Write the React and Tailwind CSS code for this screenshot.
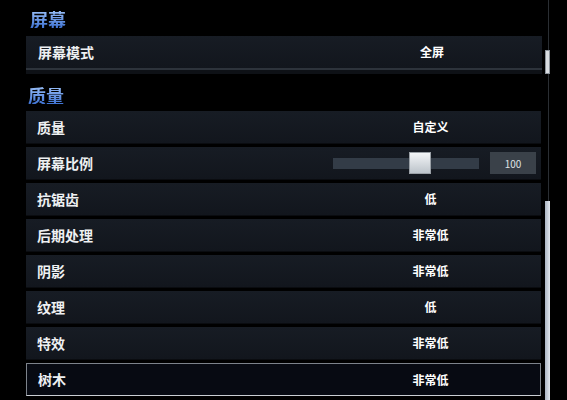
import React from "react";

const FONT = { fontFamily: '"Noto Sans CJK SC", "Noto Sans", sans-serif' };

const rows = [
  { label: "质量", value: "自定义" },
  { label: "屏幕比例", slider: 100 },
  { label: "抗锯齿", value: "低" },
  { label: "后期处理", value: "非常低" },
  { label: "阴影", value: "非常低" },
  { label: "纹理", value: "低" },
  { label: "特效", value: "非常低" },
  { label: "树木", value: "非常低", selected: true },
];

function SectionTitle({ children, className }) {
  return (
    <div className={className}>
      <span className="bg-gradient-to-b from-[#9cc0f7] to-[#3f73d4] bg-clip-text text-[18px] font-bold leading-none text-transparent">
        {children}
      </span>
    </div>
  );
}

function SettingRow({ row }) {
  const base = row.selected
    ? "border border-[#7d838b] border-b-[#c9cdd2] bg-[#070a12]"
    : "border-b border-b-[#0a0c10] bg-gradient-to-b from-[#171c24] to-[#12161d]";

  return (
    <div className={`flex h-[33px] items-center ${base}`}>
      <div className="w-[294px] pl-[11px] text-[14px] font-bold text-[#eef0f2]">{row.label}</div>
      {row.slider ? (
        <div className="flex flex-1 items-center pl-[13px]">
          <div className="relative h-[11px] w-[146px] bg-[#333c47]">
            <div className="absolute left-[76px] top-[-6px] h-[22px] w-[22px] border border-[#9aa0a6] bg-gradient-to-b from-[#f4f6f8] to-[#bcc3ca]" />
          </div>
          <div className="ml-[11px] flex h-[22px] w-[46px] items-center justify-center bg-[#3a4149] text-[10px] text-[#dfe2e5]">
            {row.slider}
          </div>
        </div>
      ) : (
        <div className="flex-1 text-center text-[12px] font-bold text-white">{row.value}</div>
      )}
    </div>
  );
}

export default function App() {
  return (
    <div className="flex h-[400px] w-[567px] overflow-hidden bg-black" style={FONT}>
      <div className="ml-[26px] flex w-[515px] flex-col">
        <SectionTitle className="flex h-[36px] items-center pl-[4px] pt-[1px]">屏幕</SectionTitle>
        <div className="flex h-[32px] w-[516px] items-center bg-gradient-to-b from-[#171c24] to-[#12161d]">
          <div className="w-[294px] pl-[12px] text-[14px] font-bold text-[#eef0f2]">屏幕模式</div>
          <div className="flex-1 pl-[2px] text-center text-[12px] font-bold text-white">全屏</div>
        </div>
        <div className="h-[2px] w-[516px] bg-[#2d333b]" />
        <div className="h-[4px] w-[516px] bg-[#0e1116]" />
        <SectionTitle className="flex h-[37px] items-center pl-[2px] pt-[4px]">质量</SectionTitle>
        <div className="flex flex-col gap-[3px]">
          {rows.map((row) => (
            <SettingRow key={row.label} row={row} />
          ))}
        </div>
      </div>

      <div className="ml-[3px] flex w-[6px] flex-col items-center">
        <div className="ml-[2px] h-[50px] w-px bg-[#2a2e33]" />
        <div className="h-[24px] w-[5px] border border-[#8c939a] bg-[#d9dde1]" />
        <div className="ml-[2px] h-[128px] w-px bg-[#2a2e33]" />
        <div className="h-[200px] w-[5px] bg-gradient-to-r from-[#aab4c2] to-[#e2e7ee]" />
      </div>
    </div>
  );
}
